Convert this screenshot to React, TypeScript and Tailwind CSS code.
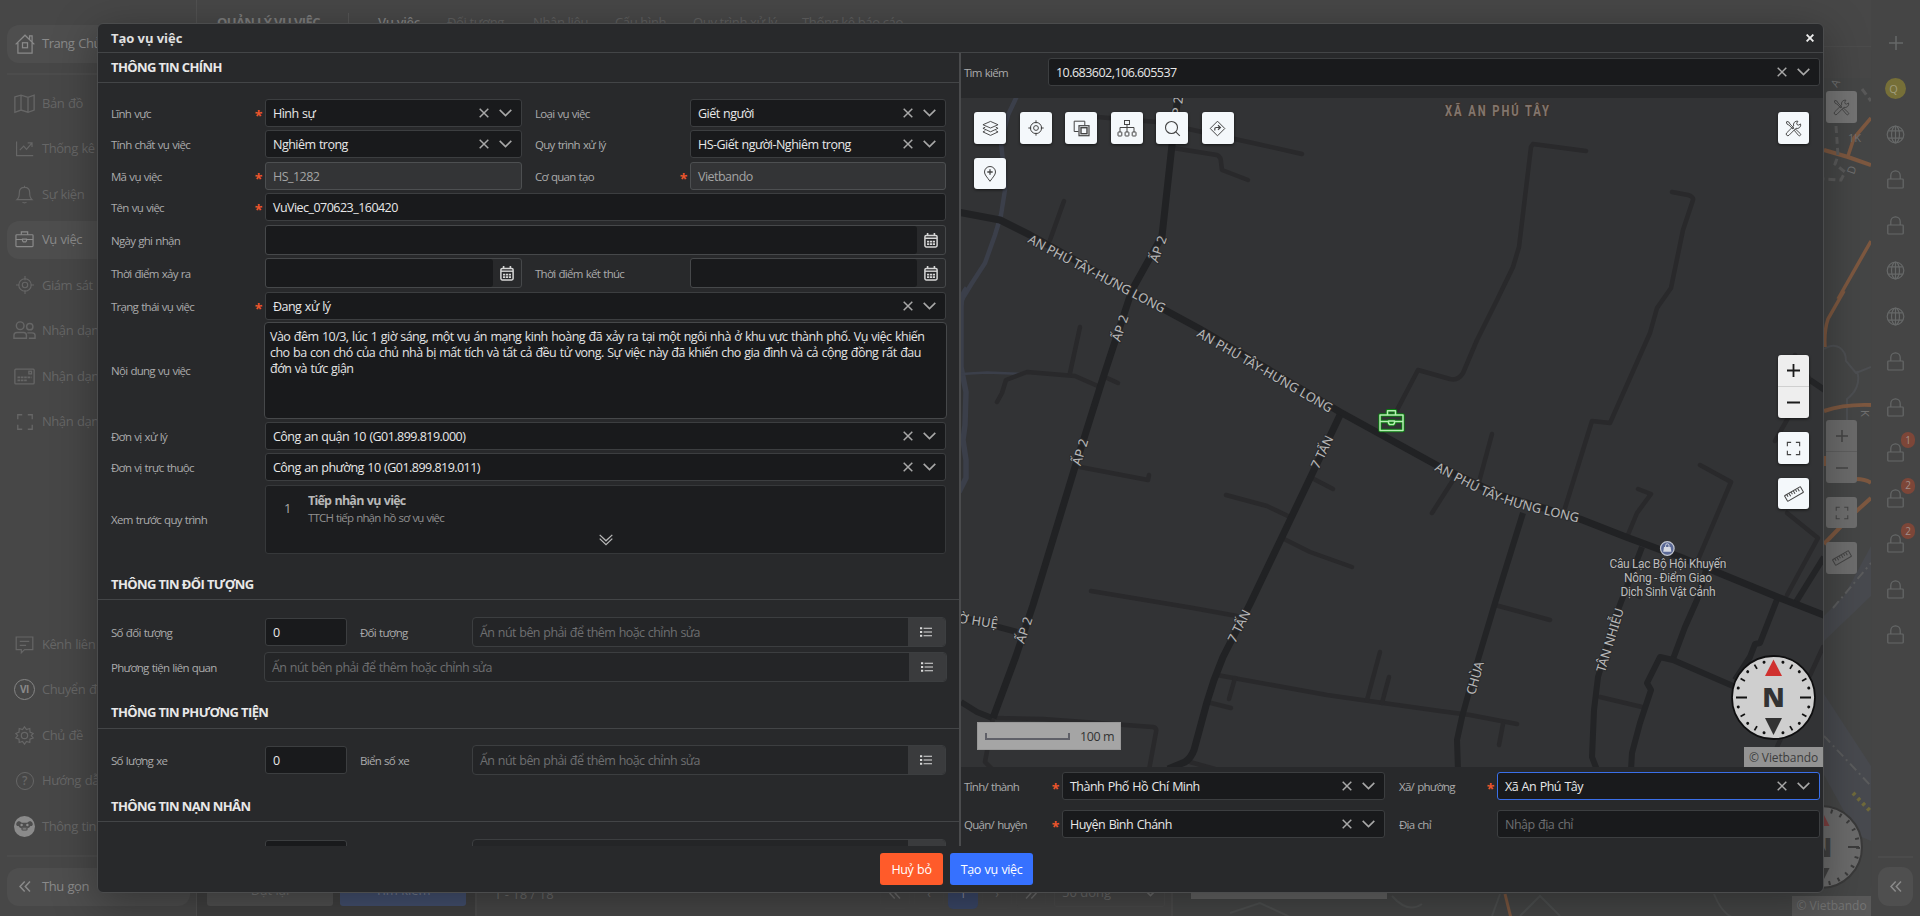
import React from "react";
import clsx from "clsx";

type IconProps = { className?: string };

const Svg = ({
  className,
  box = 24,
  sw = 1.5,
  children,
}: {
  className?: string;
  box?: number;
  sw?: number;
  children: React.ReactNode;
}) => (
  <svg
    viewBox={`0 0 ${box} ${box}`}
    className={clsx("shrink-0", className)}
    fill="none"
    stroke="currentColor"
    strokeWidth={sw}
  >
    {children}
  </svg>
);

/* ---------- shared icons ---------- */

const ClearIcon = () => (
  <svg viewBox="0 0 10 10" className="size-[10px] shrink-0" fill="none" stroke="currentColor" strokeWidth="1.5">
    <path d="M.7.7l8.6 8.6M9.3.7L.7 9.3" />
  </svg>
);
const DownIcon = () => (
  <svg viewBox="0 0 13 8" className="h-[8px] w-[13px] shrink-0" fill="none" stroke="currentColor" strokeWidth="1.6">
    <path d="M.7.9l5.8 5.7L12.3.9" />
  </svg>
);
const CalendarIcon = () => (
  <svg viewBox="0 0 14 15" className="h-[15px] w-[14px]" fill="none" stroke="#d6d6d6" strokeWidth="1.5">
    <rect x=".9" y="2.4" width="12.2" height="11.6" rx="1.4" />
    <path d="M1 5.2h12" strokeWidth="1.4" />
    <path d="M3.6 0v2.6M10.4 0v2.6" strokeWidth="1.6" />
    <path d="M3 8.6h8M3 11.2h8" strokeWidth="1.8" strokeDasharray="2.2 .7" />
  </svg>
);
const ListIcon = () => (
  <svg viewBox="0 0 12 10" className="h-[10px] w-[12px]" stroke="#dcdcdc" strokeWidth="1.1">
    <path d="M3.6 1.2H12M3.6 5H12M3.6 8.8H12" />
    <path d="M0 1.2h2.2M0 5h2.2M0 8.8h2.2" strokeWidth="2" />
  </svg>
);
const DoubleLeft = ({ className }: IconProps) => (
  <svg viewBox="0 0 12 11" className={clsx("h-[11px] w-[12px]", className)} fill="none" stroke="currentColor" strokeWidth="1.5">
    <path d="M5.7.6L1 5.5l4.7 4.9M11 .6L6.300 5.500 11 10.400" />
  </svg>
);
const FullscreenIcon = ({ className }: IconProps) => (
  <Svg className={className} box={18} sw={1.2}>
    <path d="M2.500 6.500v-4h4M11.500 2.500h4v4M15.500 11.500v4h-4M6.500 15.500h-4v-4" />
  </Svg>
);
const RulerIcon = ({ className }: IconProps) => (
  <Svg className={className} box={20} sw={1}>
    <g transform="rotate(-30 10 10)">
      <rect x=".8" y="6.800" width="18.400" height="6.400" rx=".6" />
      <path d="M3.500 7v2.400M6 7v3.300M8.500 7v2.400M11 7v3.300M13.500 7v2.400M16 7v3.300" />
    </g>
  </Svg>
);
const ToolsIcon = ({ className }: IconProps) => (
  <Svg className={className} box={18} sw={1}>
    <path d="M2 1.500l2.300.8 1 2 4.200 4.300-1 1L4.200 5.400l-2-1-.8-2.300z" />
    <path d="M10 11.200l1.400-1.300 4.800 4.500a1.300 1.300 0 01-1.900 1.900z" />
    <path d="M16.500 4.200l-2.100 1.200-1.600-.5-.4-1.600 1.300-2a3.800 3.800 0 00-4.500 5L1.800 13.600a1.700 1.700 0 002.500 2.500l7.300-7.300a3.800 3.800 0 004.900-4.600z" />
  </Svg>
);
const BriefcaseIcon = ({ className, sw = 1.5 }: IconProps & { sw?: number }) => (
  <Svg className={className} box={24} sw={sw}>
    <rect x="1.200" y="6" width="21.600" height="15" rx="1" />
    <path d="M8 6V2.300h8V6M1.200 12H9.500M14.500 12h8.300M9.500 11.500h5v2.200l-1 1.300h-3l-1-1.300z" />
  </Svg>
);
const TargetIcon = ({ className }: IconProps) => (
  <Svg className={className}>
    <circle cx="12" cy="12" r="8.300" />
    <circle cx="12" cy="12" r="3.600" />
    <path d="M12 0v5.500M12 18.500V24M0 12h4.500M19.500 12H24" />
  </Svg>
);

/* ---------- background page ---------- */

const HomeIcon = () => (
  <Svg className="size-[20px]">
    <path d="M.8 12.500L12 1.500l11.200 11M3.500 10.500V23h17V10.500M17.500 6.500V2.300h3V9.500" />
    <rect x="9" y="10.500" width="6" height="6" />
  </Svg>
);
const MapIcon = () => (
  <Svg className="size-[21px]">
    <path d="M1 4.500l7-2 8 2.500 7-2.500v17l-7 2.500-8-2.500-7 2.500zM8 2.500v17M16 5v17" />
  </Svg>
);
const StatsIcon = () => (
  <Svg className="size-[19px]">
    <path d="M2 3v18h21M6 14l5-5 3.500 4L21 5.500M16 5h5.500v5" />
  </Svg>
);
const BellIcon = () => (
  <Svg className="size-[19px]">
    <path d="M2.500 18.500c2.500-2 3-4 3-9 0-4.500 3-6.500 6.500-6.500s6.500 2 6.500 6.500c0 5 .5 7 3 9zM12 .8V3M9.500 21.500c1 1.500 4 1.500 5 0" />
  </Svg>
);
const PeopleIcon = () => (
  <Svg className="size-[23px]">
    <circle cx="7.500" cy="7" r="4" />
    <circle cx="17.500" cy="8" r="3.300" />
    <path d="M1 20v-3c0-2 1.500-3 3-3h7c2 0 3 1 3 3v3zM15 14.500h5c1.500 0 3 .8 3 2.500v3h-6.500" />
  </Svg>
);
const CardIcon = () => (
  <Svg className="size-[21px]">
    <rect x="1" y="3.500" width="22" height="17" rx="1" />
    <path d="M4 13h16M4 16.500h11" strokeWidth="2" strokeDasharray="3 .8" />
    <rect x="17" y="6" width="3" height="3" />
  </Svg>
);
const ChatIcon = () => (
  <Svg className="size-[19px]">
    <path d="M1.500 2.500h21v16H12l-4 4v-4H1.500zM6 8h12M6 13h8" />
  </Svg>
);
const ViIcon = () => (
  <span className="flex size-[21px] items-center justify-center rounded-full border border-[#858585] text-[10px] font-bold text-[#8a8a8a]">
    VI
  </span>
);
const GearIcon = () => (
  <Svg className="size-[19px]">
    <path d="M12 1l2.500 3.600 4.200-1.400.2 4.400L23 9.500 20.600 12l2.400 3-4.100 1.600-.2 4.300-4.200-1.300L12 23l-2.500-3.400-4.200 1.300-.2-4.300L1 15l2.400-3L1 9.500l4.100-1.900.2-4.400 4.200 1.400z" />
    <circle cx="12" cy="12" r="4" />
  </Svg>
);
const HelpIcon = () => (
  <span className="flex size-[18px] items-center justify-center rounded-full border-[1.5px] border-[#666] text-[12px] font-semibold">
    ?
  </span>
);
const AvatarIcon = () => (
  <svg viewBox="0 0 22 22" className="size-[21px]">
    <circle cx="11" cy="11" r="11" fill="#8b8b8b" />
    <path d="M2.500 7.500C4 4.500 6.500 5.500 8 7h6c1.500-1.500 4-2.500 5.500.5.800 2-.8 3.500-2.300 3-1.200 3.800-11.200 3.800-12.400 0-1.500.5-3.100-1-2.300-3z" fill="#4e4e4e" />
    <circle cx="8" cy="9.500" r="1.300" fill="#8b8b8b" />
    <circle cx="14" cy="9.500" r="1.300" fill="#8b8b8b" />
    <ellipse cx="11" cy="13.500" rx="3.500" ry="2" fill="#5c5c5c" />
    <path d="M9.500 13.500h3" stroke="#8b8b8b" />
  </svg>
);

const SideItem = ({ icon, label, bright, card }: { icon: React.ReactNode; label: string; bright?: boolean; card?: boolean }) => (
  <div className="flex h-[45.5px] shrink-0 items-center">
    <div
      className={clsx(
        "flex h-[38px] w-[183px] items-center rounded-[12px] whitespace-nowrap text-[13px] tracking-[-0.450px] [word-spacing:0.800px]",
        card && "bg-[#4e4e4e]",
        bright ? "text-[#8a8a8a]" : "text-[#666666]",
      )}
    >
      <span className="flex w-[35px] justify-center">{icon}</span>
      {label}
    </div>
  </div>
);

const Sidebar = () => (
  <aside className="flex h-[916px] w-[197px] shrink-0 flex-col border-r border-[#515151] bg-[#474747] pl-[7px]">
    <div className="h-[21px]" />
    <SideItem icon={<HomeIcon />} label="Trang Chủ" bright card />
    <div className="mt-[6px] mb-[6px] h-[2px] w-[183px] shrink-0 bg-[#4c4c4c]" />
    <SideItem icon={<MapIcon />} label="Bản đồ" />
    <SideItem icon={<StatsIcon />} label="Thống kê" />
    <SideItem icon={<BellIcon />} label="Sự kiện" />
    <SideItem icon={<BriefcaseIcon className="size-[19px]" />} label="Vụ việc" bright card />
    <SideItem icon={<TargetIcon className="size-[18px]" />} label="Giám sát h" />
    <SideItem icon={<PeopleIcon />} label="Nhận dạng" />
    <SideItem icon={<CardIcon />} label="Nhận dạng" />
    <SideItem icon={<FullscreenIcon className="size-[20px]" />} label="Nhận dạng" />
    <div className="h-[177px] shrink-0" />
    <SideItem icon={<ChatIcon />} label="Kênh liên" />
    <SideItem icon={<ViIcon />} label="Chuyển đổ" />
    <SideItem icon={<GearIcon />} label="Chủ đề" />
    <SideItem icon={<HelpIcon />} label="Hướng dẫ" />
    <SideItem icon={<AvatarIcon />} label="Thông tin" />
    <div className="mt-[6px] mb-[7px] h-[2px] w-[183px] shrink-0 bg-[#4c4c4c]" />
    <SideItem icon={<DoubleLeft className="text-[#8a8a8a]" />} label="Thu gọn" bright card />
  </aside>
);

const GlobeIcon = () => (
  <Svg className="size-[19px]">
    <circle cx="12" cy="12" r="10.500" />
    <ellipse cx="12" cy="12" rx="5" ry="10.500" />
    <path d="M12 1.500v21M3 7.500h18M3 16.500h18" />
  </Svg>
);
const LockIcon = () => (
  <svg viewBox="0 0 17 19" className="h-[19px] w-[17px]" fill="none" stroke="currentColor" strokeWidth="1.200">
    <rect x=".8" y="9" width="15.400" height="9" rx=".8" />
    <path d="M3.800 9V5.500a4.700 4.700 0 019.400 0V9" />
  </svg>
);

const RightBar = () => {
  const items: [string, string?][] = [
    ["plus"], ["avatar"], ["globe"], ["lock"], ["lock"], ["globe"], ["globe"], ["lock"], ["lock"],
    ["lock", "1"], ["lock", "2"], ["lock", "2"], ["lock"], ["lock"],
  ];
  return (
    <aside className="flex h-[916px] w-[49px] shrink-0 flex-col items-center bg-[#454545] pt-[20.500px] text-[#666868]">
      {items.map(([kind, badge], i) => (
        <div key={i} className="relative flex h-[45.5px] w-[49px] shrink-0 items-center justify-center">
          {kind === "plus" && (
            <Svg className="size-[16px]" box={16} sw={1.500}>
              <path d="M8 1v14M1 8h14" />
            </Svg>
          )}
          {kind === "avatar" && (
            <span className="flex size-[21px] items-center justify-center rounded-full bg-[#766f38] pr-[4px] text-[11px] text-[#a09c7c]">Q</span>
          )}
          {kind === "globe" && <GlobeIcon />}
          {kind === "lock" && <LockIcon />}
          {badge && (
            <span className="absolute top-[2px] right-[5px] flex h-[16px] w-[14px] items-center justify-center rounded-full bg-[#7d4638] text-[10px] text-[#a18f89]">
              {badge}
            </span>
          )}
        </div>
      ))}
      <div className="mt-auto mb-[9px] h-[2px] w-[35px] bg-[#4b4b4b]" />
      <div className="mb-[10px] flex h-[39px] w-[35px] items-center justify-center rounded-[11px] bg-[#4f4f4f] text-[#8a8a8a]">
        <DoubleLeft />
      </div>
    </aside>
  );
};

const PageMap = () => (
  <div className="relative h-[870px] w-[698px] shrink-0 overflow-hidden border-t border-[#4c4c4c] bg-[#454646]">
    <svg viewBox="1173 46 698 870" className="h-[870px] w-[698px]" fill="none">
      <rect x="1173" y="46" width="698" height="31" fill="#474747" />
      <path d="M1824 693l47 72v75l-14-6-33-60zM1824 615l20-20 27-50v50l-47 45z" fill="#484a4f" />
      <path d="M1824 348c12-8 22 0 22 12l10 12 15-6M1857 370c4 12-2 22-10 28v22" stroke="#4d4f52" strokeWidth="2" />
      <g stroke="#7d5840">
        <path d="M1824 149l24 7 23 8" strokeWidth="4" />
        <path d="M1848 155l6-18 17-20" strokeWidth="3.500" />
        <path d="M1871 240l-33 58M1844 290l-16 28q-4 12-3 28" strokeWidth="3.500" />
        <path d="M1824 410q20-7 47-6" strokeWidth="4" />
        <path d="M1824 455v10M1856 478q10 0 15 4M1871 497l-20 18-27 28" strokeWidth="4" />
        <path d="M1505 893l6 24" strokeWidth="3" />
      </g>
      <path d="M1862 88l9 12M1836 125l2 30-3 8 10 8-4 8-17-1" stroke="#595959" strokeWidth="3" strokeDasharray="7 4" />
      <path d="M1833 607l38-45M1824 735l47 50" stroke="#5b5c5d" strokeWidth="2" strokeDasharray="9 4 2 4" />
      <path d="M1853 792l18 19" stroke="#706a3b" strokeWidth="4" strokeDasharray="3 4" />
      <path d="M1392 895q16 18 30 8M1500 893l-8 22M1520 915l20-20 20 20M1714 893q8 20 20 24M1230 912l30-10 30 14" stroke="#4e5050" strokeWidth="2" />
      <g fill="#707070" fontSize="11">
        <text x="1837" y="87" transform="rotate(-60 1837 87)">A</text>
        <text x="1848" y="141">1K</text>
        <text x="1854" y="174" transform="rotate(-70 1854 174)">D</text>
        <text x="1861" y="409" transform="rotate(90 1861 409)">K</text>
      </g>
      <circle cx="1821" cy="846" r="41" fill="#6b6b6b" stroke="#3a3a3a" strokeWidth="2" />
      <circle cx="1821" cy="846" r="37" stroke="#3c3c3c" strokeWidth="4" strokeDasharray="2 7.680" />
      <path d="M1848 846h11" stroke="#3c3c3c" strokeWidth="2" />
      <path d="M1821 808l8.500 17h-17z" fill="#7b3f3f" />
      <path d="M1821 884l8.500-17h-17z" fill="#3f3f3f" />
      <text x="1821" y="856" textAnchor="middle" fill="#3f3f3f" fontSize="27" fontWeight="800">N</text>
    </svg>
    <div className="absolute top-[44px] left-[653px] flex w-[31px] flex-col text-[#444]">
      <span className="flex h-[32px] items-center justify-center rounded-[3px] bg-[#747474]">
        <ToolsIcon className="size-[17px]" />
      </span>
      <span className="mt-[297px] flex h-[63px] flex-col rounded-[3px] bg-[#6b6b6b]">
        <span className="flex flex-1 items-center justify-center border-b border-[#5e5e5e]">
          <Svg className="size-[14px]" box={14}><path d="M7 1v12M1 7h12" /></Svg>
        </span>
        <span className="flex flex-1 items-center justify-center">
          <Svg className="size-[14px]" box={14}><path d="M1 7h12" /></Svg>
        </span>
      </span>
      <span className="mt-[14px] flex h-[31px] items-center justify-center rounded-[3px] bg-[#6e6e6e]">
        <FullscreenIcon className="size-[16px]" />
      </span>
      <span className="mt-[14px] flex h-[32px] items-center justify-center rounded-[3px] bg-[#6e6e6e]">
        <RulerIcon className="size-[20px]" />
      </span>
    </div>
    <div className="absolute bottom-[17px] left-[18px] h-[28px] w-[196px] bg-[#646464]" />
    <div className="absolute right-0 bottom-0 flex h-[20px] w-[79px] items-center justify-center bg-[#595959] text-[12px] text-[#757575]">
      © Vietbando
    </div>
  </div>
);

const PageBox = ({ children, active }: { children: React.ReactNode; active?: boolean }) => (
  <span
    className={clsx(
      "flex h-[31px] w-[30px] items-center justify-center rounded-[5px] text-[12px]",
      active ? "bg-[#3a4768] text-[#8a8fa0]" : "border border-[#484848]",
    )}
  >
    {children}
  </span>
);

const Background = () => (
  <div className="flex h-[916px] w-[1920px] bg-[#474747]">
    <Sidebar />
    <main className="flex min-w-0 flex-1 flex-col">
      <header className="flex h-[46px] items-center whitespace-nowrap pl-[20px] text-[13px] tracking-[-0.350px] text-[#5f5f5f]">
        <span className="w-[103px] font-bold tracking-[-0.600px] text-[#7b7b7b]">QUẢN LÝ VỤ VIỆC</span>
        <span className="ml-[28px] h-[20px] w-px bg-[#555]" />
        <span className="ml-[29px] w-[69px] font-semibold text-[#808080]">Vụ việc</span>
        <span className="w-[86px]">Đối tượng</span>
        <span className="w-[82px]">Nhân liệu</span>
        <span className="w-[78px]">Cấu hình</span>
        <span className="w-[109px]">Quy trình xử lý</span>
        <span>Thống kê báo cáo</span>
      </header>
      <div className="flex flex-1">
        <div className="flex w-[280px] items-end gap-[7px] border-r-2 border-[#4c4c4c] bg-[#404040] pb-[10px] pl-[10px] text-[13px]">
          <span className="flex h-[31px] w-[126px] items-center justify-center rounded-[3px] bg-[#515151] text-[#727272]">Đặt lại</span>
          <span className="flex h-[31px] w-[126px] items-center justify-center rounded-[3px] bg-[#43506f] text-[#747b8e]">Tìm kiếm</span>
        </div>
        <div className="flex flex-1 items-end border-r-2 border-[#4c4c4c] pb-[7px] pl-[17px] text-[13px] text-[#6b6b6b]">
          <span className="mb-[5px] w-[386px]">1 - 18 / 18</span>
          <span className="flex gap-[4px]">
            <PageBox><DoubleLeft /></PageBox>
            <PageBox>‹</PageBox>
            <PageBox active>1</PageBox>
            <PageBox>›</PageBox>
            <PageBox><DoubleLeft className="rotate-180" /></PageBox>
          </span>
          <span className="mb-[2px] ml-[8px] flex h-[28px] w-[111px] items-center justify-between rounded-[3px] border border-[#4b4b4b] px-[7px]">
            50 dòng <DownIcon />
          </span>
        </div>
        <PageMap />
      </div>
    </main>
    <RightBar />
  </div>
);

/* ---------- form parts ---------- */

const Label = ({ children, required, className }: { children: React.ReactNode; required?: boolean; className?: string }) => (
  <div className={clsx("flex shrink-0 items-center justify-between text-[12px] tracking-[-0.350px] whitespace-nowrap text-[#ababab]", className)}>
    <span className="pt-[1px] text-[11.500px] tracking-[-0.720px] [word-spacing:0.800px]">{children}</span>
    {required && <span className="h-[16px] pr-[3px] text-[14px] leading-[22px] font-bold text-[#ec552b]">*</span>}
  </div>
);

const fieldBase = "flex items-center rounded-[3px] border text-[12.500px] tracking-[-0.530px] [word-spacing:0.800px] whitespace-nowrap";

const Select = ({ value, className, focused }: { value: string; className?: string; focused?: boolean }) => (
  <div
    className={clsx(
      fieldBase,
      "h-[28px] bg-[#191a1c] pr-[9px] pl-[7px] font-medium text-[#e8e8e8]",
      focused ? "border-[#3a6fe8]" : "border-[#3c3e40]",
      className,
    )}
  >
    <span className="flex-1 pt-[2px]">{value}</span>
    <span className="flex items-center gap-[10px] text-[#a8a8a8]">
      <ClearIcon />
      <DownIcon />
    </span>
  </div>
);

const Input = ({ value, placeholder, className, disabled }: { value?: string; placeholder?: string; className?: string; disabled?: boolean }) => (
  <div
    className={clsx(
      fieldBase,
      "h-[28px] pt-[2px] pl-[7px]",
      disabled ? "border-[#4d4f51] bg-[#333436] text-[#a4a4a4]" : "border-[#3c3e40] bg-[#191a1c]",
      !disabled && (value ? "font-medium text-[#e8e8e8]" : "text-[#6e6f71]"),
      className,
    )}
  >
    {value ?? placeholder}
  </div>
);

const DateInput = ({ className }: { className?: string }) => (
  <div className={clsx("flex h-[30px] rounded-[3px] border border-[#46484a] bg-[#28292b]", className)}>
    <span className="flex-1 rounded-[3px] bg-[#191a1c]" />
    <span className="flex w-[28px] items-center justify-center">
      <CalendarIcon />
    </span>
  </div>
);

const PickInput = ({ className }: { className?: string }) => (
  <div className={clsx("flex h-[30px] overflow-hidden rounded-[4px] border border-[#3c3e40] bg-[#242527]", className)}>
    <span className="flex-1 self-center pt-[2px] pl-[7px] text-[12.500px] tracking-[-0.590px] text-[#6e6f71] [word-spacing:0.800px]">Ấn nút bên phải để thêm hoặc chỉnh sửa</span>
    <span className="flex w-[37px] items-center justify-center bg-[#3a3b3d] pr-[1px]">
      <ListIcon />
    </span>
  </div>
);

const SectionTitle = ({ children, className }: { children: React.ReactNode; className?: string }) => (
  <div className={clsx("flex h-[30px] shrink-0 items-center border-b border-[#434547] pl-[13px] text-[13px] font-bold tracking-[-0.620px] text-[#e8e8e8]", className)}>
    {children}
  </div>
);

const Row = ({ children, className }: { children: React.ReactNode; className?: string }) => (
  <div className={clsx("flex shrink-0 pr-[13px] pl-[13px]", className)}>{children}</div>
);

const FormPane = () => (
  <section className="flex h-[793px] w-[863px] shrink-0 flex-col overflow-hidden border-r-2 border-[#4a4b4d]">
    <SectionTitle>THÔNG TIN CHÍNH</SectionTitle>
    <Row className="mt-[16px]">
      <Label required className="w-[154px]">Lĩnh vực</Label>
      <Select value="Hình sự" className="w-[257px]" />
      <Label className="ml-[13px] w-[155px]">Loại vụ việc</Label>
      <Select value="Giết người" className="flex-1" />
    </Row>
    <Row className="mt-[3px]">
      <Label className="w-[154px]">Tính chất vụ việc</Label>
      <Select value="Nghiêm trọng" className="w-[257px]" />
      <Label className="ml-[13px] w-[155px]">Quy trình xử lý</Label>
      <Select value="HS-Giết người-Nghiêm trọng" className="flex-1" />
    </Row>
    <Row className="mt-[4px]">
      <Label required className="w-[154px]">Mã vụ việc</Label>
      <Input disabled value="HS_1282" className="w-[257px]" />
      <Label required className="ml-[13px] w-[155px]">Cơ quan tạo</Label>
      <Input disabled value="Vietbando" className="flex-1" />
    </Row>
    <Row className="mt-[3px]">
      <Label required className="w-[154px]">Tên vụ việc</Label>
      <Input value="VuViec_070623_160420" className="flex-1" />
    </Row>
    <Row className="mt-[4px]">
      <Label className="w-[154px]">Ngày ghi nhận</Label>
      <DateInput className="flex-1" />
    </Row>
    <Row className="mt-[3px]">
      <Label className="w-[154px]">Thời điểm xảy ra</Label>
      <DateInput className="w-[257px]" />
      <Label className="ml-[13px] w-[155px]">Thời điểm kết thúc</Label>
      <DateInput className="flex-1" />
    </Row>
    <Row className="mt-[4px]">
      <Label required className="w-[154px]">Trạng thái vụ việc</Label>
      <Select value="Đang xử lý" className="flex-1" />
    </Row>
    <Row className="mt-[2px] !pr-[12px]">
      <Label className="w-[153px]">Nội dung vụ việc</Label>
      <div className="h-[97px] min-w-0 flex-1 rounded-[4px] border border-[#46484a] bg-[#191a1c] px-[5px] pt-[6px] text-[12.500px] leading-[16px] font-medium tracking-[-0.540px] text-[#e4e4e4] [word-spacing:0.800px]">
        <p className="whitespace-nowrap">Vào đêm 10/3, lúc 1 giờ sáng, một vụ án mạng kinh hoàng đã xảy ra tại một ngôi nhà ở khu vực thành phố. Vụ việc khiến</p>
        <p className="whitespace-nowrap">cho ba con chó của chủ nhà bị mất tích và tất cả đều tử vong. Sự việc này đã khiến cho gia đình và cả cộng đồng rất đau</p>
        <p className="whitespace-nowrap">đớn và tức giận</p>
      </div>
    </Row>
    <Row className="mt-[3px]">
      <Label className="w-[154px]">Đơn vị xử lý</Label>
      <Select value="Công an quận 10 (G01.899.819.000)" className="flex-1" />
    </Row>
    <Row className="mt-[3px]">
      <Label className="w-[154px]">Đơn vị trực thuộc</Label>
      <Select value="Công an phường 10 (G01.899.819.011)" className="flex-1" />
    </Row>
    <Row className="mt-[4px]">
      <Label className="w-[154px]">Xem trước quy trình</Label>
      <div className="flex h-[69px] flex-1 flex-col rounded-[3px] border border-[#36383a] bg-[#1c1d1f]">
        <div className="flex h-[47px] pl-[18px]">
          <span className="w-[24px] pt-[13px] text-[13px] text-[#a8a8a8]">1</span>
          <div className="flex flex-col pt-[6px]">
            <span className="text-[12.500px] leading-[18px] font-bold tracking-[-0.780px] text-[#b8b8b8] [word-spacing:0.800px]">Tiếp nhận vụ việc</span>
            <span className="text-[11.500px] leading-[16px] tracking-[-0.830px] text-[#909090] [word-spacing:0.800px]">TTCH tiếp nhận hồ sơ vụ việc</span>
          </div>
        </div>
        <svg viewBox="0 0 14 12" className="mx-auto mt-[1px] h-[12px] w-[14px]" fill="none" stroke="#b8b8b8" strokeWidth="1.300">
          <path d="M.7.900L7 6.800 13.300.900M.7 4.600L7 10.700l6.300-6.100" />
        </svg>
      </div>
    </Row>
    <SectionTitle className="mt-[16px]">THÔNG TIN ĐỐI TƯỢNG</SectionTitle>
    <Row className="mt-[17px] items-center">
      <Label className="w-[154px]">Số đối tượng</Label>
      <Input value="0" className="w-[82px]" />
      <Label className="ml-[13px] w-[112px]">Đối tượng</Label>
      <PickInput className="flex-1" />
    </Row>
    <Row className="mt-[5px] !pr-[12px]">
      <Label className="w-[153px]">Phương tiện liên quan</Label>
      <PickInput className="flex-1" />
    </Row>
    <SectionTitle className="mt-[17px] !pb-[1px]">THÔNG TIN PHƯƠNG TIỆN</SectionTitle>
    <Row className="mt-[16px] items-center">
      <Label className="w-[154px]">Số lượng xe</Label>
      <Input value="0" className="w-[82px]" />
      <Label className="ml-[13px] w-[112px]">Biển số xe</Label>
      <PickInput className="flex-1" />
    </Row>
    <SectionTitle className="mt-[17px]">THÔNG TIN NẠN NHÂN</SectionTitle>
    {/* next row is scrolled past the lower edge: only its field outlines reach into view */}
    <Row className="mt-[17px] items-center">
      <span className="w-[154px]" />
      <span className="h-[28px] w-[82px] rounded-[3px] border border-[#3c3e40] bg-[#191a1c]" />
      <span className="ml-[13px] w-[112px]" />
      <span className="flex h-[30px] flex-1 justify-end overflow-hidden rounded-[4px] border border-[#3c3e40] bg-[#242527]">
        <span className="w-[37px] bg-[#3a3b3d]" />
      </span>
    </Row>
  </section>
);

/* ---------- map ---------- */

const minorRoads = [
  "M1097 117L1157 122 1193 130 1253 143 1302 154",
  "M1173 148L1217 155Q1221 157 1221 162L1222 170 1248 180",
  "M1064 201L1050 240",
  "M997 402L1002 393 1006 380 1027 372 1075 376 1100 387",
  "M1080 327L1070 373",
  "M1107 378L1118 383",
  "M1080 467L1148 480 1149 475",
  "M1226 495L1267 506 1290 517",
  "M1310 477L1333 489",
  "M1282 538L1310 552 1352 567",
  "M1091 591L1193 608 1237 616",
  "M1397 410L1418 370 1450 379Q1458 381 1463 373L1477 340 1498 298 1513 267 1519 247 1531 147 1533 144 1586 151",
  "M1672 192L1688 195Q1694 197 1693 200L1683 230 1671 288 1657 308 1650 333 1610 423 1592 421 1565 508",
  "M1492 434L1479 482",
  "M1455 477L1432 513",
  "M1638 489L1651 494 1637 513 1627 537",
  "M1700 465L1731 482 1697 562",
  "M1626 590L1640 597",
  "M1787 513L1818 538 1787 595",
  "M1795 355L1810 380 1788 418 1775 441",
  "M1495 605L1550 620",
  "M1217 675L1327 695 1383 703 1440 711 1470 715 1517 724",
  "M1503 724L1499 745",
  "M1380 652L1367 700",
  "M1389 677L1382 703",
  "M1235 678L1229 699",
  "M1207 702L1231 708",
  "M1190 762L1215 769",
  "M993 718L1043 719 1153 727Q1157 728 1156 732L1149 770",
  "M993 718L985 762 992 769",
  "M1600 697L1642 707",
  "M1823 647L1777 747 1768 770",
];
const midRoads = [
  "M961 702L977 712 992 718",
  "M961 617L1017 632",
  "M1810 380L1826 391",
  "M1523 513L1495 603 1477 663 1462 717 1457 740 1458 770",
  "M1642 547L1618 610 1598 677 1594 710 1592 757 1597 770",
  "M1706 570L1697 600 1685 627 1673 659",
  "M1824 557L1796 602",
  "M1778 597L1760 643 1755 644 1750 657 1735 680",
  "M1733 686L1703 673 1673 660 1660 657 1647 683 1651 690 1640 723 1632 753 1631 770",
];
const majorRoads = [
  "M958 212L1000 220 1030 235 1165 310 1200 329 1340 412 1440 467 1500 495 1580 519 1626 537 1680 557 1780 598 1826 616",
  "M1178 96L1172 145 1162 236 1132 290 1103 378 1075 467 1033 605 1016 656 993 718",
  "M1340 415L1313 472 1282 537 1250 604 1223 657 1214 680 1207 702 1194 750Q1191 758 1185 762L1168 769",
];

const compassTicks = Array.from({ length: 24 }, (_, i) => i).filter((i) => i !== 0 && i !== 6 && i !== 12 && i !== 18);

const StreetText = ({ x, y, r, children, len }: { x: number; y: number; r: number; children: string; len: number }) => (
  <text x={x} y={y} dy="4.600" transform={`rotate(${r} ${x} ${y})`} textAnchor="middle" textLength={len}>
    {children}
  </text>
);

const MapDrawing = () => (
  <svg viewBox="961 98 862 669" className="h-[669px] w-[862px]" fill="none">
    <g stroke="#3b3f4a" strokeLinejoin="round">
      <path d="M1017 96L1008 115 1001 143 1004 170 1005 190 1001 215 995 235 985 263 972 283 961 301" strokeWidth="4.500" />
      <path d="M967 288Q961 295 961 307V367L966 392 965 425 963 440 966 460V478L959 492" strokeWidth="5.500" />
      <path d="M961 374L987 372.500 1023 374" strokeWidth="2.500" />
    </g>
    <g stroke="#29292b" strokeWidth="4.500" strokeLinecap="round" strokeLinejoin="round">
      {minorRoads.map((d) => (
        <path key={d} d={d} />
      ))}
    </g>
    <g stroke="#232426" strokeWidth="6" strokeLinejoin="round">
      {midRoads.map((d) => (
        <path key={d} d={d} />
      ))}
    </g>
    <g stroke="#212224" strokeWidth="7" strokeLinejoin="round">
      {majorRoads.map((d) => (
        <path key={d} d={d} />
      ))}
    </g>
    <defs>
      <path id="way-a" d="M1027 242L1060 260 1110 286 1166 315" />
      <path id="way-b" d="M1196 336L1260 373 1340 419" />
      <path id="way-c" d="M1434 470L1470 489Q1500 504 1530 511L1584 524" />
    </defs>
    <g
      fontFamily="'Noto Sans', sans-serif"
      fontSize="12.800"
      fill="#b8b8b8"
      stroke="#2a2b2d"
      strokeWidth="2"
      paintOrder="stroke"
    >
      <text textLength="153">
        <textPath href="#way-a" textLength="153">AN PHÚ TÂY-HƯNG LONG</textPath>
      </text>
      <text textLength="154">
        <textPath href="#way-b" textLength="154">AN PHÚ TÂY-HƯNG LONG</textPath>
      </text>
      <text textLength="154">
        <textPath href="#way-c" textLength="154">AN PHÚ TÂY-HƯNG LONG</textPath>
      </text>
      <StreetText x={1177} y={110} r={-84} len={27}>ẤP 2</StreetText>
      <StreetText x={1158} y={249} r={-70} len={27}>ẤP 2</StreetText>
      <StreetText x={1120} y={328} r={-71} len={27}>ẤP 2</StreetText>
      <StreetText x={1080} y={452} r={-73} len={27}>ẤP 2</StreetText>
      <StreetText x={1024} y={630} r={-71} len={27}>ẤP 2</StreetText>
      <StreetText x={1322} y={452} r={-64} len={35}>7 TẤN</StreetText>
      <StreetText x={1239} y={626} r={-63} len={35}>7 TẤN</StreetText>
      <StreetText x={1475} y={678} r={-74} len={34}>CHÙA</StreetText>
      <StreetText x={1610} y={640} r={-73} len={66}>TÂN NHIỄU</StreetText>
      <StreetText x={978} y={621} r={9} len={40}>Ờ HUỆ</StreetText>
    </g>
    <text
      transform="translate(1445 115.500) scale(.8 1)"
      fontFamily="Roboto, sans-serif"
      fontSize="14"
      fontWeight="700"
      textLength="130"
      fill="#82766e"
      stroke="#38302b"
      strokeWidth="2.500"
      paintOrder="stroke"
    >
      XÃ AN PHÚ TÂY
    </text>
    <circle cx="1667.300" cy="548.500" r="6.800" fill="#5b6996" stroke="#c3c7d2" strokeWidth="1.200" />
    <path d="M1664 547h6.600l.8 4.800h-8.200z" fill="#d6d9e2" />
    <path d="M1665.600 547v-1.500a1.700 1.700 0 013.400 0v1.500" stroke="#d6d9e2" strokeWidth="1" />
    <g
      fontFamily="Roboto, sans-serif"
      fontSize="12"
      textAnchor="middle"
      fill="#bcbcbc"
      stroke="#2a2b2d"
      strokeWidth="2"
      paintOrder="stroke"
    >
      <text x="1668" y="568" textLength="117">Câu Lạc Bộ Hội Khuyến</text>
      <text x="1668" y="582" textLength="88">Nông - Điểm Giao</text>
      <text x="1668" y="595.500" textLength="95">Dịch Sinh Vật Cảnh</text>
    </g>
    <g strokeLinejoin="round">
      {[
        { c: "#0c7a12", w: 3.400 },
        { c: "#b5f0b2", w: 1.500 },
      ].map(({ c, w }) => (
        <path
          key={c}
          stroke={c}
          strokeWidth={w}
          d="M1380 415h23v15.500h-23zM1387.500 415v-4.300h8v4.300M1380 421.500h8.500M1394.500 421.500h8.500M1388.500 421h6v2l-1 1.500h-4l-1-1.500z"
        />
      ))}
    </g>
    <g>
      <circle cx="1773.500" cy="697.500" r="41.500" fill="#cfcfcf" stroke="#0f0f10" strokeWidth="1.800" />
      {compassTicks.map((i) =>
        [2, 4, 8, 10, 14, 16, 20, 22].includes(i) ? (
          <path key={i} d="M1773.500 664.500v-5" stroke="#111" strokeWidth="1.800" transform={`rotate(${i * 15} 1773.500 697.500)`} />
        ) : (
          <circle key={i} cx="1773.500" cy="661" r="1.500" fill="#111" transform={`rotate(${i * 15} 1773.500 697.500)`} />
        ),
      )}
      <path d="M1736 697.500h11M1800 697.500h11" stroke="#111" strokeWidth="1.800" />
      <path d="M1773.500 659.500l8.500 16.500h-17z" fill="#d0312f" />
      <path d="M1773.500 735l8.500-17h-17z" fill="#333" />
      <text x="1773.500" y="707" textAnchor="middle" fontFamily="'Open Sans', sans-serif" fontSize="27" fontWeight="800" fill="#333">
        N
      </text>
    </g>
  </svg>
);

const Tool = ({ children, className }: { children: React.ReactNode; className?: string }) => (
  <span className={clsx("flex size-[32px] items-center justify-center rounded-[3px] bg-[#f4f8fb] text-[#444] shadow-[0_1px_3px_rgba(0,0,0,0.6)]", className)}>
    {children}
  </span>
);

const MapPane = () => (
  <div className="relative h-[669px] w-[862px] overflow-hidden bg-[#323335]">
    <MapDrawing />
    <div className="absolute top-[14px] left-[13px] flex gap-[13.500px]">
      <Tool>
        <Svg className="size-[17px]" box={18} sw={1}>
          <path d="M9 1.500L17 5 9 8.500 1 5zM3.500 7.500L1 8.800 9 12.500l8-3.700-2.500-1.300M3.500 11.300L1 12.600 9 16.300l8-3.700-2.500-1.300" />
        </Svg>
      </Tool>
      <Tool>
        <Svg className="size-[16px]" box={16} sw={1}>
          <circle cx="8" cy="8" r="5.600" />
          <circle cx="8" cy="8" r="2.400" />
          <path d="M8 .3v3M8 12.700v3M.3 8h3M12.700 8h3" />
        </Svg>
      </Tool>
      <Tool>
        <Svg className="size-[17px]" box={17} sw={1}>
          <path d="M5.500 11.500H1.200V1.200h10.600v4" />
          <rect x="6" y="5.700" width="10" height="10" strokeWidth="1.200" />
          <rect x="8" y="7.700" width="6" height="6" strokeWidth="1.400" />
        </Svg>
      </Tool>
      <Tool>
        <Svg className="size-[20px]" box={20} sw={1}>
          <rect x="7.500" y="2.500" width="5" height="4" />
          <rect x="1" y="14" width="3.800" height="4" rx=".5" />
          <rect x="8.100" y="14" width="3.800" height="4" rx=".5" />
          <rect x="15.200" y="14" width="3.800" height="4" rx=".5" />
          <path d="M10 6.500V14M3 14v-4.500h14V14" />
        </Svg>
      </Tool>
      <Tool>
        <Svg className="size-[17px]" box={17} sw={1.100}>
          <circle cx="7.500" cy="7.500" r="6" />
          <path d="M11.800 11.800l4 4" />
        </Svg>
      </Tool>
      <Tool>
        <Svg className="size-[17px]" box={17} sw={1}>
          <path d="M8.500 1.200l7.300 7.300-7.300 7.300L1.200 8.500z" />
          <path d="M5.800 10.500V8.800q0-1.300 1.300-1.300h3.600M9 5.300l2.400 2.200L9 9.800" strokeWidth="1.200" />
        </Svg>
      </Tool>
    </div>
    <div className="absolute top-[60px] left-[13px]">
      <Tool className="!h-[31px]">
        <Svg className="size-[16px]" box={16} sw={1}>
          <path d="M8 15.300C5 11 2.500 8.800 2.500 6a5.500 5.500 0 0111 0c0 2.800-2.500 5-5.500 9.300z" />
          <path d="M8 3.300v5.400M5.300 6h5.400" strokeWidth="1.300" />
        </Svg>
      </Tool>
    </div>
    <div className="absolute top-[14px] left-[817px] flex w-[31px] flex-col">
      <Tool className="!w-[31px]"><ToolsIcon className="size-[17px]" /></Tool>
      <div className="mt-[211px] flex h-[63px] flex-col rounded-[3px] bg-[#eeeeee] text-[#1a1a1a] shadow-[0_1px_3px_rgba(0,0,0,0.6)]">
        <span className="flex flex-1 items-center justify-center border-b border-[#cfcfcf]">
          <Svg className="size-[13px]" box={13} sw={1.800}><path d="M6.500 0v13M0 6.500h13" /></Svg>
        </span>
        <span className="flex flex-1 items-center justify-center">
          <Svg className="size-[13px]" box={13} sw={2}><path d="M0 6.500h13" /></Svg>
        </span>
      </div>
      <Tool className="mt-[14px] !w-[31px]"><FullscreenIcon className="size-[17px]" /></Tool>
      <Tool className="mt-[14px] !h-[31px] !w-[31px]"><RulerIcon className="size-[20px]" /></Tool>
    </div>
    <div className="absolute top-[624px] left-[16px] flex h-[28px] w-[144px] items-center border border-[#989898] bg-[#acacac]/95 pl-[7px]">
      <span className="h-[7px] w-[85px] border-2 border-t-0 border-[#5f6068]" />
      <span className="ml-[10px] pt-[2px] text-[12.500px] tracking-[-0.400px] text-[#333]">100 m</span>
    </div>
    <div className="absolute right-0 bottom-0 flex h-[20px] w-[79px] items-center justify-center bg-[#999999]/95 pt-[1px] text-[12px] tracking-[-0.100px] text-[#3c3c3c]">
      © Vietbando
    </div>
  </div>
);

const LocationPane = () => (
  <section className="flex w-[862px] flex-col">
    <div className="flex h-[45px] pt-[5px] pl-[3px]">
      <Label className="h-[28px] w-[84px]">Tìm kiếm</Label>
      <Select value="10.683602,106.605537" className="w-[772px]" />
    </div>
    <MapPane />
    <div className="flex pt-[5px] pl-[3px]">
      <Label required className="w-[98px]">Tỉnh/ thành</Label>
      <Select value="Thành Phố Hồ Chí Minh" className="w-[323px]" />
      <Label required className="ml-[14px] w-[98px]">Xã/ phường</Label>
      <Select focused value="Xã An Phú Tây" className="w-[323px]" />
    </div>
    <div className="flex pt-[10px] pl-[3px]">
      <Label required className="w-[98px]">Quận/ huyện</Label>
      <Select value="Huyện Bình Chánh" className="w-[323px]" />
      <Label className="ml-[14px] w-[98px]">Địa chỉ</Label>
      <Input placeholder="Nhập địa chỉ" className="w-[323px]" />
    </div>
  </section>
);

const Dialog = () => (
  <div
    role="dialog"
    className="absolute top-[23px] left-[97px] flex h-[870px] w-[1727px] flex-col overflow-hidden rounded-[6px] border border-[#4b4c4d] bg-[#28292b] shadow-[0_10px_44px_rgba(0,0,0,0.34)]"
  >
    <header className="flex h-[29px] shrink-0 items-center justify-between border-b border-[#434547] pr-[9px] pl-[13px]">
      <h1 className="pt-[1px] text-[13px] font-bold tracking-[-0.050px] text-[#e0e0e0]">Tạo vụ việc</h1>
      <svg viewBox="0 0 8 8" className="size-[8px]" stroke="#ededed" strokeWidth="1.900">
        <path d="M.6.6l6.800 6.800M7.400.6L.6 7.400" />
      </svg>
    </header>
    <div className="flex h-[793px] shrink-0">
      <FormPane />
      <LocationPane />
    </div>
    <footer className="flex flex-1 gap-[7px] pt-[7px] pl-[782px] text-[12.500px] font-medium tracking-[-0.380px] text-white [word-spacing:0.800px]">
      <span className="flex h-[32px] w-[63px] items-center justify-center rounded-[3px] bg-[#ff5b2a] pt-[2px]">Huỷ bỏ</span>
      <span className="flex h-[32px] w-[83px] items-center justify-center rounded-[3px] bg-[#3671ff] pt-[2px]">Tạo vụ việc</span>
    </footer>
  </div>
);

export default function App() {
  return (
    <div className="relative h-[916px] w-[1920px] overflow-hidden font-['Open_Sans','Noto_Sans',sans-serif]">
      <Background />
      <Dialog />
    </div>
  );
}
